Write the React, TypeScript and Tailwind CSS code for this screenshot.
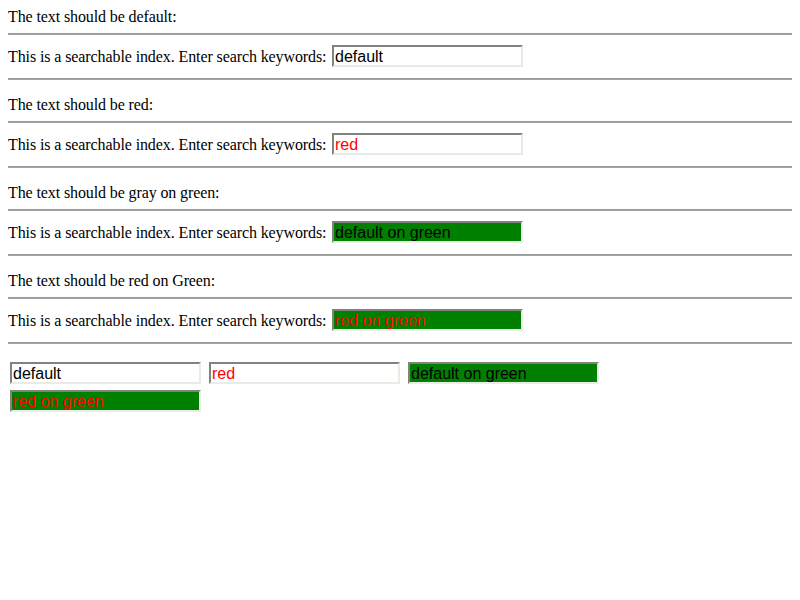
const serif = "font-['Liberation_Serif','Times_New_Roman',serif]";
const sans = "font-['Liberation_Sans',Arial,sans-serif]";

type Campo = {
  rotulo: string;
  valor: string;
  cor: string;
};

const campos: Campo[] = [
  { rotulo: "The text should be default:", valor: "default", cor: "bg-white text-black" },
  { rotulo: "The text should be red:", valor: "red", cor: "bg-white text-[#ff0000]" },
  { rotulo: "The text should be gray on green:", valor: "default on green", cor: "bg-[#008000] text-black" },
  { rotulo: "The text should be red on Green:", valor: "red on green", cor: "bg-[#008000] text-[#ff0000]" },
];

function Regua() {
  return <div className="h-[2px] w-full border-t border-b border-t-[#999999] border-b-[#a3a3a3]" />;
}

function Caixa({ valor, cor }: { valor: string; cor: string }) {
  return (
    <input
      readOnly
      value={valor}
      className={`${sans} ${cor} box-border h-[22px] w-[191px] border-2 border-t-[#84837b] border-l-[#84837b] border-b-[#ebebe6] border-r-[#ebebe6] px-[1px] pt-[2px] pb-0 text-[16px] leading-[18px] outline-none`}
    />
  );
}

export default function App() {
  return (
    <div className={`${serif} h-[600px] bg-white px-2 pt-2 text-[16px] text-black`}>
      {campos.map((campo) => (
        <div key={campo.valor} className="mb-4">
          <div className="h-[17px] leading-[17px] tracking-[-0.11px]">{campo.rotulo}</div>
          <div className="mt-2">
            <Regua />
          </div>
          <div className="mt-2 flex h-[27px] items-start pt-[2px]">
            <span className="w-[324px] shrink-0 leading-[24px] tracking-[-0.1px]">
              This is a searchable index. Enter search keywords:
            </span>
            <Caixa valor={campo.valor} cor={campo.cor} />
          </div>
          <div className="mt-2">
            <Regua />
          </div>
        </div>
      ))}
      <div className="flex w-[620px] flex-wrap gap-x-[8px] gap-y-[6px] pl-[2px] pt-[2px]">
        {campos.map((campo) => (
          <Caixa key={campo.valor + "-solto"} valor={campo.valor} cor={campo.cor} />
        ))}
      </div>
    </div>
  );
}
